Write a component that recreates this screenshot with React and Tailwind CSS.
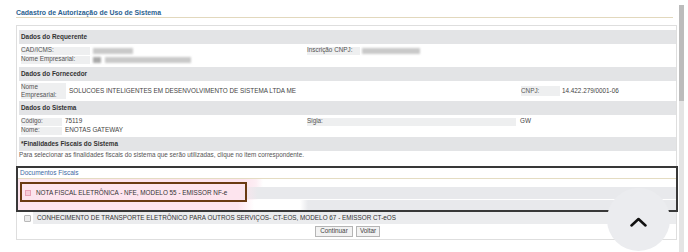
import React from "react";

function Blur({ w }) {
  return <div className={`h-[6px] bg-[#c9c9c9] blur-[1px] ${w}`} />;
}

export default function App() {
  return (
    <div className="relative w-[688px] h-[252px] overflow-hidden bg-white font-['Liberation_Sans',Arial,sans-serif] text-[6.35px] leading-none text-[#444] flex">
      <div className="w-[679px] pl-[16px] flex flex-col">
        <div className="w-[657px] h-[18px] pt-[10px] border-b border-[#e2d8bd] text-[6.95px] font-bold text-[#2c6290]">
          Cadastro de Autorização de Uso de Sistema
        </div>
        <div className="mt-[7px] w-[661px] border border-[#dedede] pt-[4px] pl-[2px] pb-[2px] flex flex-col">
          <div className="h-[14px] bg-[#e3e4e6] pl-[2px] flex items-center font-bold text-[6.4px] text-[#333]">Dados do Requerente</div>
          <div className="mt-[2px] h-[9px] flex items-center">
            <div className="ml-[2px] w-[69px] h-[8px] bg-[#eeeff0] flex items-center text-[#555]">CAD/ICMS:</div>
            <div className="ml-[3px] w-[214px] flex items-center"><Blur w="w-[40px]" /></div>
            <div className="w-[53px] h-[8px] bg-[#eeeff0] flex items-center text-[#555]">Inscrição CNPJ:</div>
            <div className="ml-[2px] flex-1 flex items-center"><Blur w="w-[58px]" /></div>
          </div>
          <div className="h-[9px] flex items-center">
            <div className="ml-[2px] w-[69px] h-[8px] bg-[#eeeff0] flex items-center text-[#555]">Nome Empresarial:</div>
            <div className="ml-[3px] flex items-center gap-[4px]"><div className="h-[6px] w-[8px] bg-[#a9a9a9] blur-[1px]" /><Blur w="w-[86px]" /></div>
          </div>
          <div className="mt-[3px] h-[14px] bg-[#e3e4e6] pl-[2px] flex items-center font-bold text-[6.4px] text-[#333]">Dados do Fornecedor</div>
          <div className="mt-[2px] h-[16px] flex items-center">
            <div className="ml-[2px] w-[45px] h-[16px] bg-[#eeeff0] flex flex-col justify-center gap-[1px] text-[#555]"><span>Nome</span><span>Empresarial:</span></div>
            <div className="ml-[3px] w-[452px] text-[#444]">SOLUCOES INTELIGENTES EM DESENVOLVIMENTO DE SISTEMA LTDA ME</div>
            <div className="w-[39px] h-[10px] bg-[#eeeff0] flex items-center text-[#555]">CNPJ:</div>
            <div className="ml-[2px] text-[#444]">14.422.279/0001-06</div>
          </div>
          <div className="mt-[2px] h-[14px] bg-[#e3e4e6] pl-[2px] flex items-center font-bold text-[6.4px] text-[#333]">Dados do Sistema</div>
          <div className="mt-[2px] h-[9px] flex items-center">
            <div className="ml-[2px] w-[41px] h-[8px] bg-[#eeeff0] flex items-center text-[#555]">Código:</div>
            <div className="ml-[3px] w-[242px]">75119</div>
            <div className="w-[209px] h-[8px] bg-[#eeeff0] flex items-center text-[#555]">Sigla:</div>
            <div className="ml-[4px]">GW</div>
          </div>
          <div className="h-[9px] flex items-center">
            <div className="ml-[2px] w-[41px] h-[8px] bg-[#eeeff0] flex items-center text-[#555]">Nome:</div>
            <div className="ml-[3px]">ENOTAS GATEWAY</div>
          </div>
          <div className="mt-[2px] h-[14px] bg-[#e3e4e6] pl-[2px] flex items-center font-bold text-[6.4px] text-[#333]">*Finalidades Fiscais do Sistema</div>
          <div className="h-[9px] flex items-center text-[#555]">Para selecionar as finalidades fiscais do sistema que serão utilizadas, clique no item correspondente.</div>

          <div className="mt-[6px] -ml-[3px] w-[662px] border-2 border-[#383838] flex flex-col">
            <div className="h-[10px] pl-[2px] flex items-center text-[#4169a3] text-[6.5px]">Documentos Fiscais</div>
            <div className="h-[1px] bg-[#e4dcc2]" />
            <div className="relative flex flex-col">
              <div className="h-[8px] bg-[linear-gradient(to_right,#fde4ee_0,#fde4ee_225px,#fdeef4_238px,#ffffff_245px)]" />
              <div className="h-[12px] pl-[7px] flex items-center gap-[5px] bg-[linear-gradient(to_right,#fde4ee_0,#fde4ee_222px,#e8e9ec_240px)] text-[#333]">
                <div className="w-[6px] h-[6px] border border-[#e8a3b8] bg-[#f6cbd8]" />
                <span>NOTA FISCAL ELETRÔNICA - NFE, MODELO 55 - EMISSOR NF-e</span>
              </div>
              <div className="h-[1px] bg-[linear-gradient(to_right,#fde4ee_0,#fde4ee_225px,#ffffff_240px)]" />
              <div className="h-[10px] bg-[linear-gradient(to_right,#fde4ee_0,#fde4ee_220px,#ffffff_236px,#ffffff_282px,#e8e9ec_290px)]" />
              <div className="absolute left-[2px] top-[3px] w-[227px] h-[20px] border-2 border-[#6a3a12]" />
            </div>
          </div>

          <div className="h-[12px] flex items-center">
            <div className="ml-[5px] w-[7px] h-[7px] border border-[#b9b9b9] bg-[#ececec] rounded-[1px]" />
            <div className="ml-[2px] flex-1 h-[12px] pl-[4px] bg-[#ebecee] flex items-center text-[#333]">
              CONHECIMENTO DE TRANSPORTE ELETRÔNICO PARA OUTROS SERVIÇOS- CT-EOS, MODELO 67 - EMISSOR CT-eOS
            </div>
          </div>
          <div className="mt-[2px] h-[11px] flex justify-center gap-[3px]">
            <div className="w-[38px] h-[11px] border border-[#b5b5b5] bg-[#f2f2f2] flex items-center justify-center text-[#444]">Continuar</div>
            <div className="w-[24px] h-[11px] border border-[#b5b5b5] bg-[#f2f2f2] flex items-center justify-center text-[#444]">Voltar</div>
          </div>
        </div>
      </div>
      <div className="mt-[5px] w-[5px] flex flex-col">
        <div className="h-[96px] bg-[#bcbcbc]" />
        <div className="flex-1 bg-[#e4e4e4]" />
      </div>
      <div className="absolute left-[607px] top-[188px] w-[63px] h-[63px] rounded-full bg-[#ebecef] flex items-center justify-center">
        <svg width="17" height="10" viewBox="0 0 17 10" className="mt-[4px]">
          <polyline points="1.5,8.5 8.5,2 15.5,8.5" fill="none" stroke="#111" strokeWidth="2.5" strokeLinecap="round" strokeLinejoin="round" />
        </svg>
      </div>
    </div>
  );
}
